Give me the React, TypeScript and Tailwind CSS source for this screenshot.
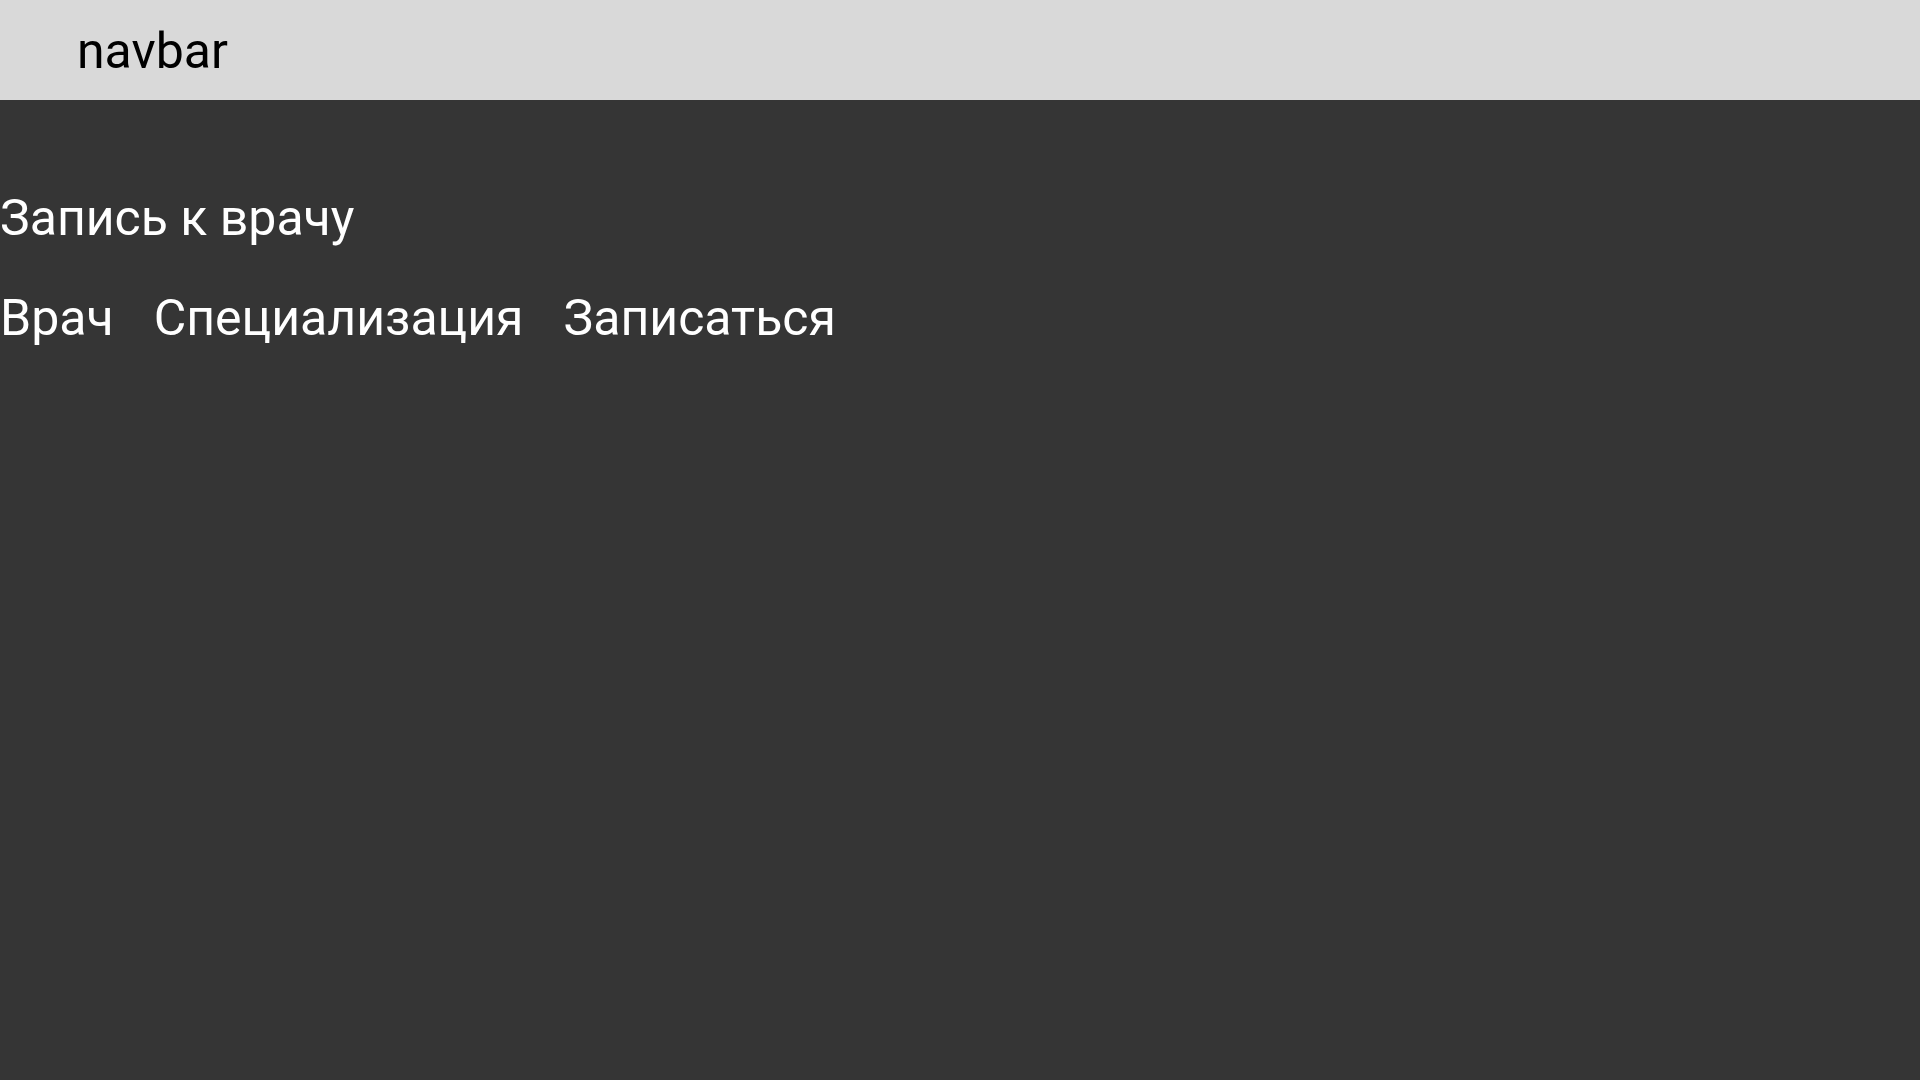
export default function App() {
  return (
    <div className="min-h-screen bg-[#353535] font-['Roboto',sans-serif]">
      <nav className="h-[100px] bg-[#d9d9d9] flex items-center pl-[77px] pt-[2px]">
        <span className="text-[50px] leading-[59px] text-black">navbar</span>
      </nav>
      <main className="pt-[89px] text-white">
        <h1 className="text-[50px] leading-[59px]">Запись к врачу</h1>
        <div className="mt-[41px] flex gap-[40px] text-[50px] leading-[59px]">
          <span>Врач</span>
          <span>Специализация</span>
          <span>Записаться</span>
        </div>
      </main>
    </div>
  );
}
